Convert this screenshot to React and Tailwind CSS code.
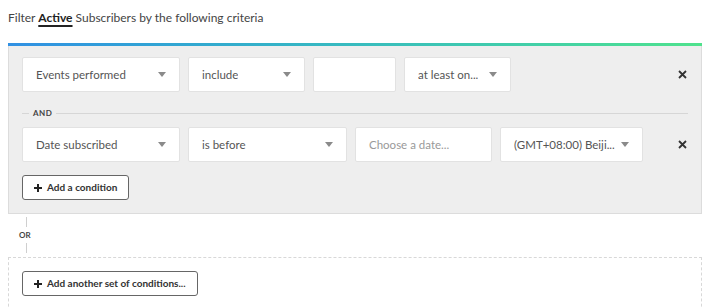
import React from "react";

const Caret = () => (
  <svg width="8" height="5" viewBox="0 0 8 5" className="shrink-0">
    <path d="M0 0h8L4 5z" fill="#8a8a8a" />
  </svg>
);

const CloseX = () => (
  <svg width="9" height="9" viewBox="0 0 9 9" className="shrink-0">
    <path d="M1 1l7 7M8 1L1 8" stroke="#333" strokeWidth="1.8" />
  </svg>
);

const Plus = () => (
  <svg width="8" height="8" viewBox="0 0 8 8" className="shrink-0">
    <path d="M4 0v8M0 4h8" stroke="#222" strokeWidth="2" />
  </svg>
);

function Select({ label, width }) {
  return (
    <div
      className={`${width} h-[35px] bg-white border border-[#e2e2e2] rounded-[2px] flex items-center justify-between pl-[13px] pr-[13px] text-[11.5px] text-[#555]`}
    >
      <span className="truncate">{label}</span>
      <Caret />
    </div>
  );
}

function Input({ placeholder = "", width }) {
  return (
    <div
      className={`${width} h-[35px] bg-white border border-[#e2e2e2] rounded-[2px] flex items-center pl-[13px] text-[11.5px] text-[#999]`}
    >
      {placeholder}
    </div>
  );
}

function Button({ children }) {
  return (
    <button className="h-[25px] px-[11px] flex items-center gap-[5px] bg-white border border-[#666] rounded-[3px] text-[10px] font-bold text-[#333]">
      <Plus />
      {children}
    </button>
  );
}

export default function App() {
  return (
    <div
      className="w-[717px] h-[307px] bg-white overflow-hidden"
      style={{ fontFamily: "Lato, 'Open Sans', sans-serif" }}
    >
      <div className="pl-[8px] pt-[9px] h-[43px] text-[12px] text-[#444]">
        Filter{" "}
        <span className="font-bold text-[#222] underline underline-offset-[3px] decoration-[1.5px]">
          Active
        </span>{" "}
        Subscribers by the following criteria
      </div>

      <div className="ml-[8px] w-[694px]">
        <div className="h-[3px] bg-gradient-to-r from-[#3190e3] to-[#4fe28c]" />
        <div className="bg-[#eeeeee] border border-t-0 border-[#dcdcdc] px-[13px] pt-[11px] pb-[13px]">
          {/* row 1 */}
          <div className="flex items-center gap-2">
            <Select label="Events performed" width="w-[158px]" />
            <Select label="include" width="w-[117px]" />
            <Input width="w-[83px]" />
            <Select label="at least on..." width="w-[107px]" />
            <div className="flex-1" />
            <div className="pr-[1px]">
              <CloseX />
            </div>
          </div>

          {/* AND */}
          <div className="flex items-center h-[12px] mt-[15px] mb-[8px]">
            <div className="w-[7px] h-px bg-[#d6d6d6]" />
            <span className="px-[4px] text-[8px] font-bold tracking-[0.5px] text-[#444]">
              AND
            </span>
            <div className="flex-1 h-px bg-[#d6d6d6]" />
          </div>

          {/* row 2 */}
          <div className="flex items-center gap-2">
            <Select label="Date subscribed" width="w-[158px]" />
            <Select label="is before" width="w-[159px]" />
            <Input placeholder="Choose a date..." width="w-[137px]" />
            <Select label="(GMT+08:00) Beiji..." width="w-[143px]" />
            <div className="flex-1" />
            <div className="pr-[1px]">
              <CloseX />
            </div>
          </div>

          <div className="mt-[13px]">
            <Button>Add a condition</Button>
          </div>
        </div>

        {/* OR */}
        <div className="h-[43px] flex flex-col items-start pl-[11px]">
          <div className="ml-[7px] w-px h-[10px] mt-[3px] bg-[#cfcfcf]" />
          <span className="text-[8px] font-bold text-[#444] leading-[16px]">OR</span>
          <div className="ml-[7px] w-px h-[10px] bg-[#cfcfcf]" />
        </div>

        <div className="border border-dashed border-[#d8d8d8] border-b-0 h-[60px] px-[13px] pt-[13px]">
          <Button>Add another set of conditions...</Button>
        </div>
      </div>
    </div>
  );
}
